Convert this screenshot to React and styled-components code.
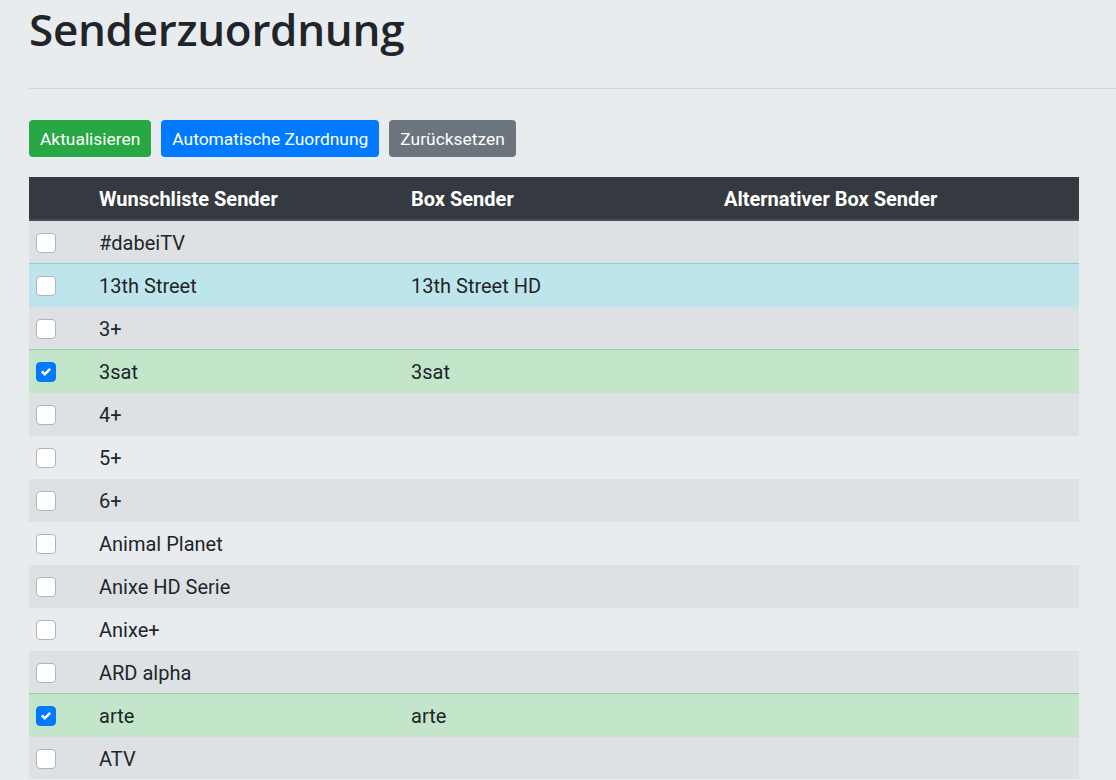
import React from 'react';
import styled, { createGlobalStyle } from 'styled-components';

const GlobalStyle = createGlobalStyle`
  body {
    margin: 0;
    background: #e9ecef;
    font-family: Roboto, "Liberation Sans", sans-serif;
    color: #212529;
    overflow: hidden;
  }
`;

const channels = [
  { name: '#dabeiTV', box: '', checked: false },
  { name: '13th Street', box: '13th Street HD', checked: false, variant: 'info' },
  { name: '3+', box: '', checked: false },
  { name: '3sat', box: '3sat', checked: true, variant: 'success' },
  { name: '4+', box: '', checked: false },
  { name: '5+', box: '', checked: false },
  { name: '6+', box: '', checked: false },
  { name: 'Animal Planet', box: '', checked: false },
  { name: 'Anixe HD Serie', box: '', checked: false },
  { name: 'Anixe+', box: '', checked: false },
  { name: 'ARD alpha', box: '', checked: false },
  { name: 'arte', box: 'arte', checked: true, variant: 'success' },
  { name: 'ATV', box: '', checked: false },
];

const rowColors = {
  info: { bg: '#bee5eb', border: '#86cfda' },
  success: { bg: '#c3e6cb', border: '#8fd19e' },
};

const App = () => {
  const [rows, setRows] = React.useState(channels);

  const toggle = (i) => {
    setRows(rows.map((r, j) => (j === i ? { ...r, checked: !r.checked } : r)));
  };

  return (
    <Page>
      <GlobalStyle />
      <Title>Senderzuordnung</Title>
      <Divider />
      <Toolbar>
        <Button color="#28a745">Aktualisieren</Button>
        <Button color="#007bff">Automatische Zuordnung</Button>
        <Button color="#6c757d">Zurücksetzen</Button>
      </Toolbar>
      <Table>
        <colgroup>
          <col style={{ width: 58 }} />
          <col style={{ width: 312 }} />
          <col style={{ width: 313 }} />
          <col />
        </colgroup>
        <thead>
          <tr>
            <Th></Th>
            <Th>Wunschliste Sender</Th>
            <Th>Box Sender</Th>
            <Th>Alternativer Box Sender</Th>
          </tr>
        </thead>
        <tbody>
          {rows.map((r, i) => (
            <Row key={r.name} $index={i} $variant={r.variant}>
              <Td>
                <Check $checked={r.checked} onClick={() => toggle(i)}>
                  {r.checked && (
                    <svg width="10" height="10" viewBox="0 0 8 8">
                      <path fill="#fff" d="M6.564.75l-3.59 3.612-1.538-1.55L0 4.26l2.974 2.99L8 2.193z" />
                    </svg>
                  )}
                </Check>
              </Td>
              <Td>{r.name}</Td>
              <Td>{r.box}</Td>
              <Td></Td>
            </Row>
          ))}
        </tbody>
      </Table>
    </Page>
  );
};

const Page = styled.div`
  padding-left: 29px;
  padding-top: 2px;
`;

const Title = styled.h1`
  margin: 0;
  font-family: "Open Sans", sans-serif;
  font-weight: 600;
  font-size: 44px;
  line-height: 54px;
  color: #212529;
  letter-spacing: -0.3px;
`;

const Divider = styled.hr`
  margin: 32px 0 31px;
  border: 0;
  border-top: 1px solid #d3d6d9;
`;

const Toolbar = styled.div`
  display: flex;
  gap: 10px;
  margin-bottom: 20px;
`;

const Button = styled.button`
  background: ${(p) => p.color};
  color: #fff;
  border: 0;
  border-radius: 4px;
  height: 37px;
  padding: 0 11px;
  font-family: Roboto, "Liberation Sans", sans-serif;
  font-size: 17.4px;
  cursor: pointer;
`;

const Table = styled.table`
  width: 1050px;
  border-collapse: collapse;
  table-layout: fixed;
  font-size: 20px;
`;

const Th = styled.th`
  background: #343a40;
  color: #fff;
  text-align: left;
  font-weight: 700;
  padding: 9px 12px 6px;
  line-height: 27px;
  border-bottom: 2px solid #454d55;
`;

const Row = styled.tr`
  background: ${(p) =>
    p.$variant ? rowColors[p.$variant].bg : p.$index % 2 === 0 ? '#dee1e4' : '#e9ecef'};
  border-top: 1px solid ${(p) => (p.$variant ? rowColors[p.$variant].border : 'transparent')};
`;

const Td = styled.td`
  padding: 9px 12px 6px;
  line-height: 27px;
  height: 27px;
`;

const Check = styled.span`
  display: flex;
  align-items: center;
  justify-content: center;
  width: 18px;
  height: 18px;
  margin-left: -5px;
  margin-top: -2px;
  border-radius: 4px;
  background: ${(p) => (p.$checked ? '#007bff' : '#fff')};
  border: 1px solid ${(p) => (p.$checked ? '#007bff' : '#adb5bd')};
  cursor: pointer;
`;

export default App;
